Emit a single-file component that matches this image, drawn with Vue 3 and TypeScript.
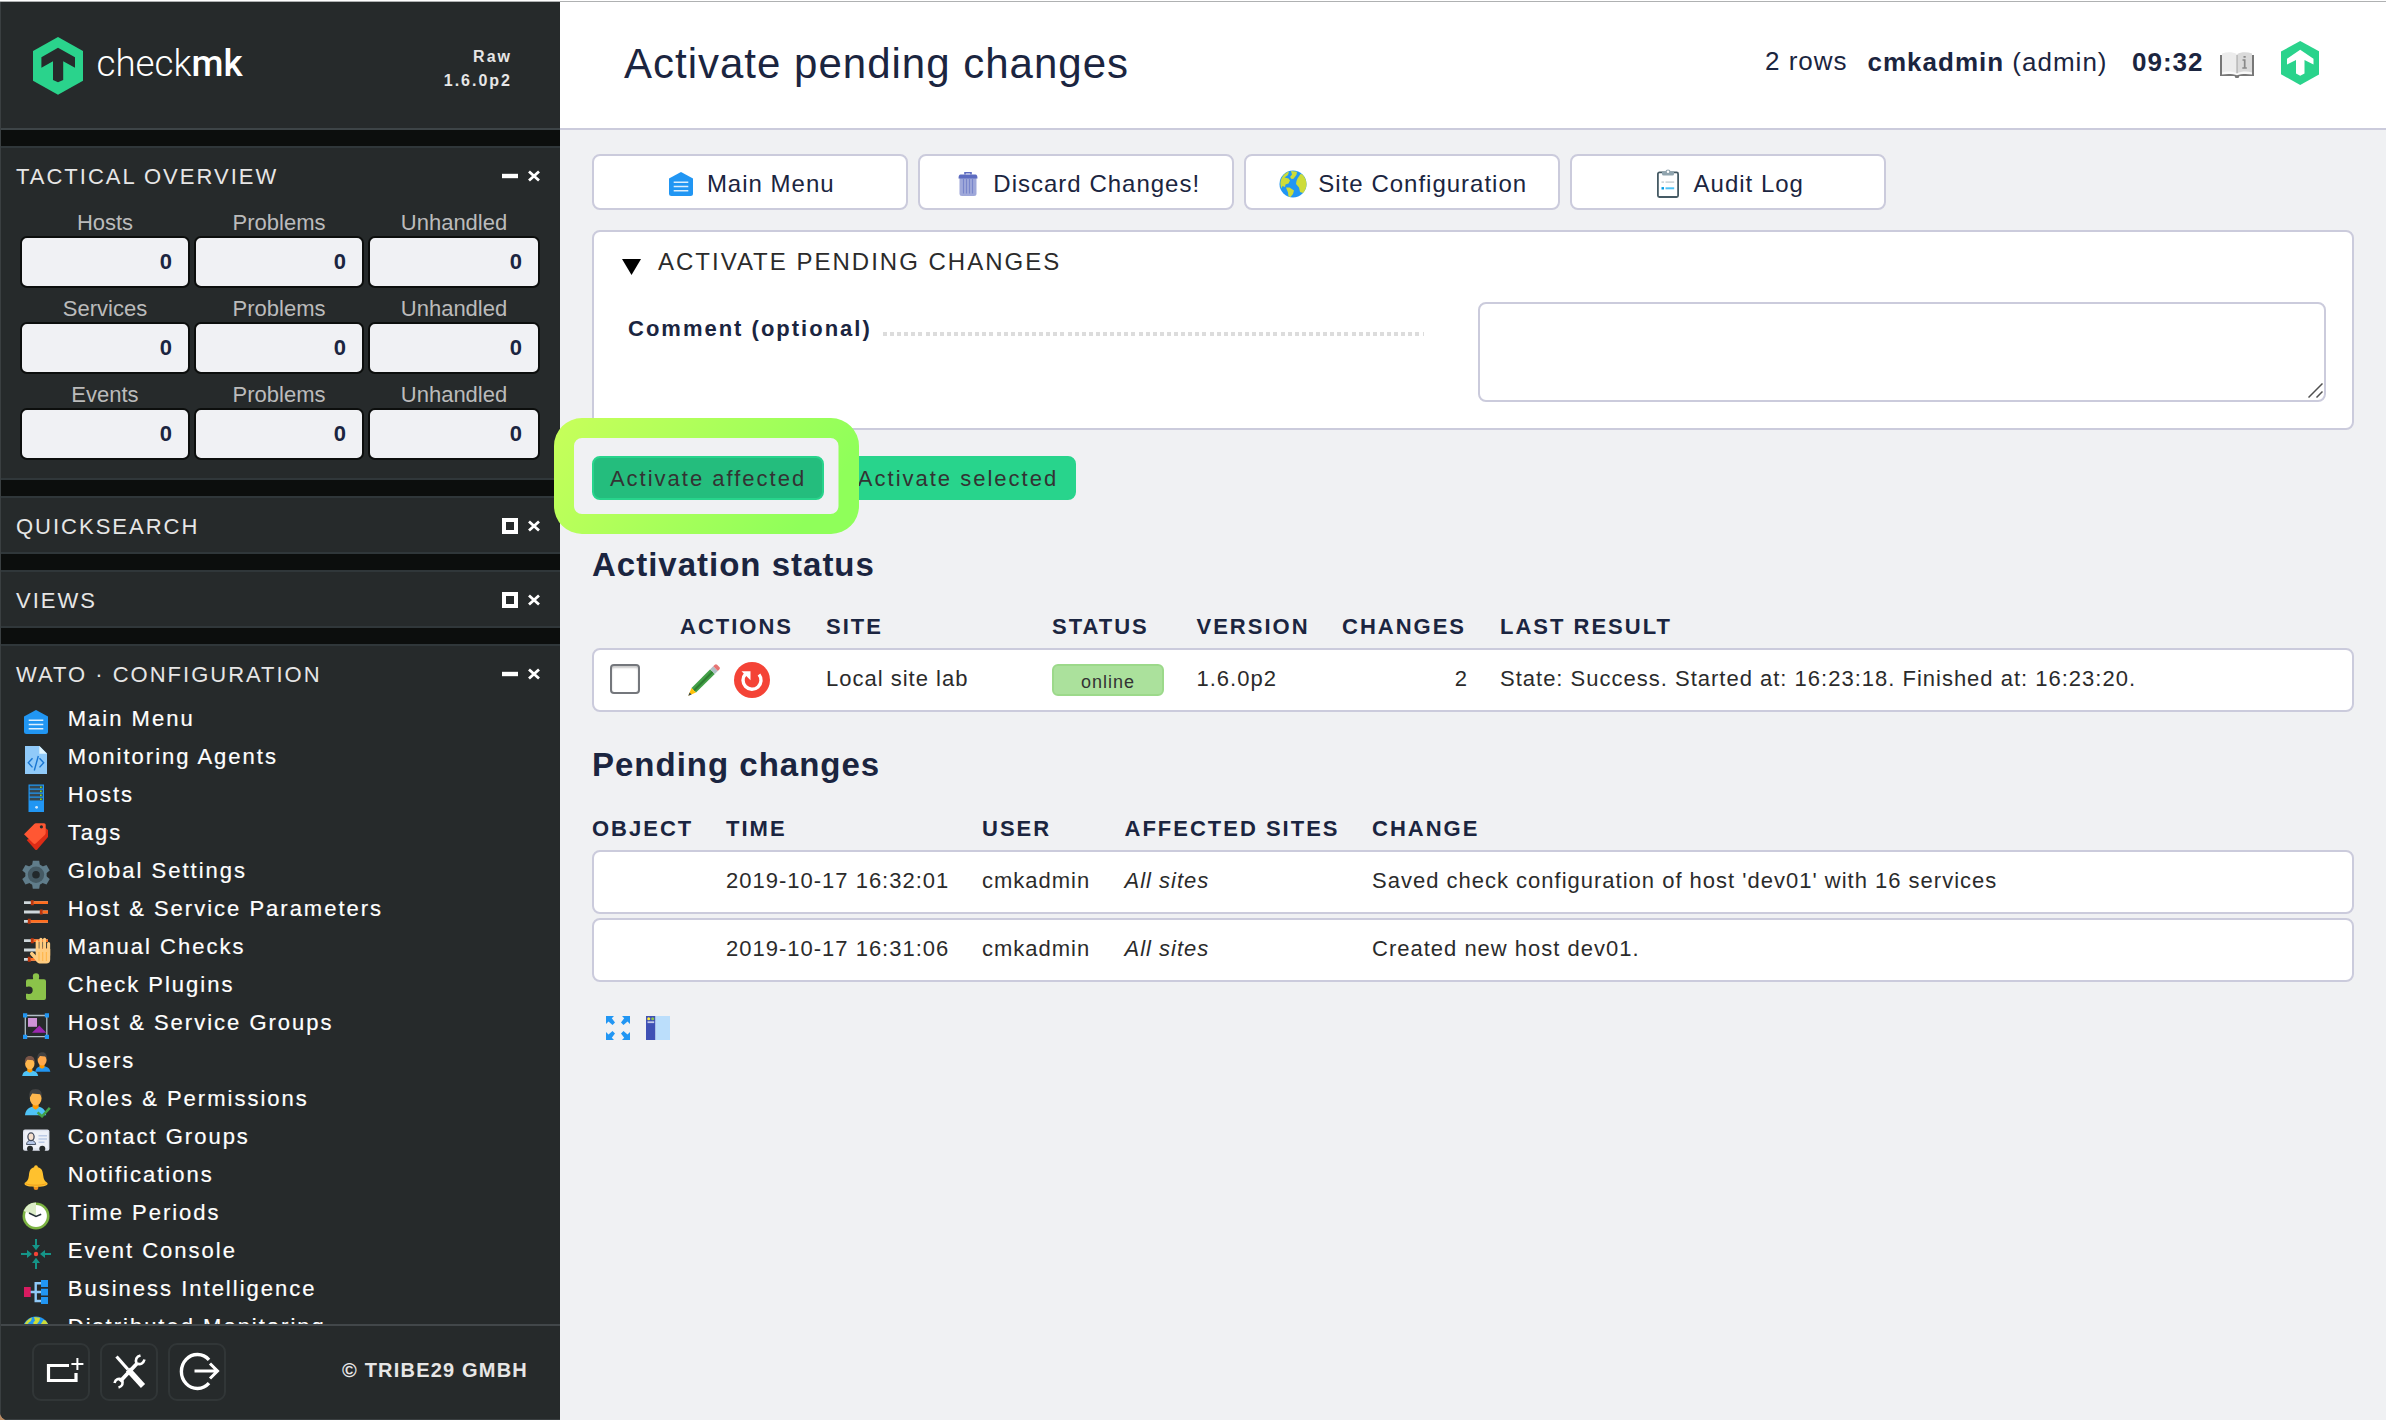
<script setup lang="ts">
interface MenuItem {
  label: string
  icon: string
}

interface OverviewCell {
  label: string
  value: number
}

interface PendingChange {
  time: string
  user: string
  sites: string
  text: string
}

const house =
  '<path d="M16 4 28 10.5v15a2.5 2.5 0 0 1-2.5 2.5h-19A2.5 2.5 0 0 1 4 25.500v-15z" fill="#2196f3"/><path d="M8.700 14.300h14.600M8.700 18.500h14.600M8.700 22.700h14.600" stroke="#dceefd" stroke-width="1.400"/>'

const globe =
  '<circle cx="16" cy="16" r="13.500" fill="#2196f3"/><path d="M4.500 10.500C6 7 9 4.500 12 3.500l-1 3.500-3.500 2.500 4 1 1.500 2-1.500 3-3 1-.5 2.500-2.500-1-1 2.500c-1.500-3.500-1.500-7 0-10zM14 3l6 .7-.5 3-3 4-2 .3-1.500-2 2-2.500zM20.500 10.500 23.500 6l2 .5c2.500 2.700 4 6 4 9.700 0 3.500-1.500 6.500-3.500 8.800l-3-1-1-4.500-3-3.500.5-3zM9 19.500l3.500 0 4.500 3-1 3.500-2.500 3-2-.5-.5-4z" fill="#cddc39"/>'

const sliders =
  '<path d="M4 6.700h24M4 16h24M4 25.300h24" stroke="#cfd8dc" stroke-width="2.800"/><path d="M14 6.700h14M23 16h5M11 25.300h17" stroke="#ff6d1f" stroke-width="2.800"/><path d="M12.300 4.200v5M21.300 13.500v5M9.300 22.800v5" stroke="#bf360c" stroke-width="3"/>'

const icons: Record<string, string> = {
  house,
  globe,
  sliders,
  agents:
    '<path d="M5 2h14.500L27 9.500V30H5z" fill="#90caf9"/><path d="M19.300 2 27 9.700h-7.700z" fill="#e1f5fe"/><path d="m12.500 14.200-4.200 4.600 4.200 4.600m7-9.200 4.200 4.600-4.200 4.600M18.300 12l-4 14.500" fill="none" stroke="#1976d2" stroke-width="1.400"/>',
  hosts:
    '<path d="M8.500 2.500H24V30H8.500z" fill="#2196f3"/><path d="M9.700 3.800h13.100v2.700H9.700zM9.700 7.800h13.100v2.700H9.700zM9.700 11.800h13.100v2.700H9.700zM9.700 15.800h13.100v2.700H9.700z" fill="#37474f"/><path d="M20 5.200h1.700M20 9.200h1.700M20 13.200h1.700M20 17.200h1.700" stroke="#8bd626" stroke-width="1.400"/><circle cx="16.600" cy="25.300" r="1.400" fill="#cfe8fd"/>',
  tags:
    '<path d="M25.500 8 28 10v7L17.300 29.500c-.7.700-1.500.7-2.200 0L6.700 20z" fill="#dd2c16"/><path d="M4 14.300 14 4.200c.6-.6 1.200-.9 2-.9h8c1 0 1.700.7 1.700 1.700v8c0 .8-.3 1.400-.9 2L16 23.200c-.9.9-1.900.9-2.800 0z" fill="#ff5733"/><circle cx="21.400" cy="6.800" r="1.600" fill="#262a2b"/>',
  gear:
    '<g fill="#607d8b"><circle cx="16" cy="16.700" r="10.700"/><path d="M12.800 2.700h6.400l.8 5v18l-.8 5h-6.400l-.8-5v-18z"/><path d="M12.800 2.700h6.400l.8 5v18l-.8 5h-6.400l-.8-5v-18z" transform="rotate(60 16 16.700)"/><path d="M12.800 2.700h6.400l.8 5v18l-.8 5h-6.400l-.8-5v-18z" transform="rotate(120 16 16.700)"/></g><circle cx="16" cy="16.700" r="8.200" fill="#455a64"/><circle cx="16" cy="16.700" r="3.800" fill="#22292c"/>',
  manual:
    sliders +
    '<path d="M17.200 7.500v10M20.900 5.300v12M24.600 5.300v12M28.600 9.500v12" stroke="#ffcc80" stroke-width="3.100" stroke-linecap="round"/><path d="m11.800 19.700 6 6.300" stroke="#ffcc80" stroke-width="3.600" stroke-linecap="round"/><path d="M15.700 15h14.500v10.500a4 4 0 0 1-4 4h-5.500c-3 0-5-2-5-5z" fill="#ffcc80"/><path d="M19 18v9M22.700 18v9M26.400 18v9" stroke="#ffb74d" stroke-width="1.200"/>',
  plugin:
    '<path d="M8 7.300h4.800c.7-.7 0-1.500 0-2.800a3.200 3.200 0 0 1 6.400 0c0 1.300-.7 2.100 0 2.800H24a2 2 0 0 1 2 2V26a2 2 0 0 1-2 2H8a2 2 0 0 1-2-2v-4.300c1.500 0 2 .2 3 .2a3.700 3.700 0 1 0 0-7.400c-1 0-1.500.3-3 .3V9.300a2 2 0 0 1 2-2z" fill="#8bc34a"/>',
  groups:
    '<path d="M5.300 5.500h21.500v21.200H5.300z" fill="none" stroke="#b0bec5" stroke-width="1.300"/><path d="M3 3.200h4.200v4.200H3zM24.800 3.200H29v4.200h-4.200zM3 24.700h4.200v4.200H3zM24.800 24.700H29v4.200h-4.200z" fill="#2196f3"/><path d="M8 8h9v8.800H8z" fill="#ce93d8"/><path d="m19.300 15.500 7 7.300H12z" fill="#9c27b0"/>',
  users:
    '<path d="M15.300 23.800c.5-4 3-5.500 7-5.800 4.500.3 7.400 2 8 5.800z" fill="#2196f3"/><path d="M19.500 15h5v4.500l-2.500 1.200-2.500-1.200z" fill="#ff9800"/><ellipse cx="22.100" cy="12" rx="4.500" ry="5.500" fill="#ffa94d"/><path d="M17.500 11.500c-.5-5 1.500-7.200 4.800-7.200 3.500 0 5 2.700 4.400 7.200l-1.200-3-5.500-.5z" fill="#424242"/><path d="M2.200 28c.5-4 3.300-5.500 7.600-5.800 4.700.3 7.700 1.800 8.400 5.800z" fill="#4fc3f7"/><path d="M7.300 19h5v4.500l-2.500 1.300-2.500-1.300z" fill="#ff9800"/><ellipse cx="9.800" cy="15.800" rx="4.700" ry="5.700" fill="#ffb74d"/><path d="M5 15.300C4.300 10.500 6.500 8 9.800 8c3.500 0 5.300 2.500 4.800 7.300l-1.300-3-6-.5z" fill="#795548"/>',
  roles:
    '<path d="M5 29.300c.5-6 4-8.500 10.700-9 6.500.5 9.800 3 10.500 9z" fill="#4fc3f7"/><path d="M12.600 16h6v5.700l-3 2-3-2z" fill="#ff9800"/><ellipse cx="15.700" cy="12" rx="5.900" ry="7.500" fill="#ffb74d"/><path d="M9.500 12C8.500 6 11 3 15.500 3c4.700 0 7 3 6.200 9l-1.500-3.800-8-.8z" fill="#424242"/><path d="m17.600 26.300 4.400 4 7.800-8.500" fill="none" stroke="#43a047" stroke-width="2.500"/>',
  contact:
    '<rect x="3" y="5.600" width="26.400" height="21.200" rx="2" fill="#dfe4ef"/><path d="M4.500 7.200h23.400v17H4.500z" fill="#eef1f8"/><path d="M6.500 20.500c.3-3 2-4 4.500-4.300 2.700.3 4.200 1.300 4.700 4.300z" fill="#b5c7e8" stroke="#4a5568" stroke-width="1"/><ellipse cx="11" cy="12.800" rx="3.100" ry="3.900" fill="#f5e0cf" stroke="#424a5c" stroke-width="1.300"/><path d="M18.500 11.800h8.500M18.500 15h8.500M18.500 18.200h6" stroke="#bccbe6" stroke-width="1.400"/><circle cx="10" cy="24.800" r="3" fill="#262a2b"/><circle cx="22.300" cy="24.800" r="3" fill="#262a2b"/>',
  bell:
    '<circle cx="16" cy="25.700" r="2.400" fill="#ef8f1c"/><path d="M16 3.300c1.200 0 1.800.8 1.900 2 4.300 1.200 4.900 4.200 5.300 8.200.4 4 1.800 6 4.300 7.500v1c0 2-6 2.900-11.500 2.900S4.600 24 4.600 22v-1c2.500-1.500 3.900-3.500 4.300-7.500.4-4 1-7 5.200-8.200.1-1.200.7-2 1.900-2z" fill="#ffc12e"/><path d="M5.500 21.700c5 2 16 2 21 0" fill="none" stroke="#ef9f1c" stroke-width="1"/>',
  clock:
    '<circle cx="16" cy="16" r="13.500" fill="#7cb342"/><circle cx="16" cy="16" r="10.900" fill="#fff"/><path d="M16 16V2.500A13.500 13.500 0 0 0 3.600 11z" fill="#dcedc8"/><path d="m9 13 7 3.400 5.200-2.200" fill="none" stroke="#263238" stroke-width="1.500"/>',
  event:
    '<path d="M15 1h2v6h3l-4 5.300L12 7h3zM15 31h2v-6h3l-4-5.300-4 5.300h3zM1 15v2h6v3l5-4-5-4v3zM31 15v2h-6v3l-5-4 5-4v3z" fill="#159588"/><circle cx="16" cy="16" r="2.200" fill="#f44336"/>',
  bi:
    '<path d="M10 16h12M22 7.200h-6.300V25H22" fill="none" stroke="#90caf9" stroke-width="2.400"/><path d="M4 11h6.700v10H4z" fill="#d81b60"/><path d="M21 4h7v7h-7zM21 12.800h7v6.700h-7zM21 21h7v7h-7z" fill="#2196f3"/>',
  trash:
    '<path d="M13 6.500V4.800h6v1.700" fill="none" stroke="#5c6bc0" stroke-width="1.600"/><path d="M7.500 10h17v15.500a2.500 2.500 0 0 1-2.500 2.500H10a2.500 2.500 0 0 1-2.500-2.500z" fill="#9fa8da"/><path d="M11.500 11v14.500M14.500 11v14.500M17.500 11v14.500M20.500 11v14.500" stroke="#7986cb" stroke-width="1.100"/><path d="M8.500 6.400h15c1.200 0 2 1.500 2 4.100h-19c0-2.600.8-4.100 2-4.100z" fill="#5c6bc0"/>',
  clipboard:
    '<rect x="5.900" y="4.400" width="20.200" height="24.600" rx="1.500" fill="#fff" stroke="#455a64" stroke-width="1.800"/><path d="M10 3.500h3.300a2.800 2.800 0 0 1 5.400 0H22V6a1.500 1.500 0 0 1-1.500 1.500h-9A1.500 1.500 0 0 1 10 6z" fill="#90a4ae"/><circle cx="16" cy="3.700" r="1.200" fill="#fff"/><path d="M9.500 14.200H12M13.500 14.200h8.700" stroke="#cfd8dc" stroke-width="1.800"/><path d="M9.500 20.300H12" stroke="#039be5" stroke-width="2.400"/><path d="M13.500 20.300h8.700" stroke="#4fc3f7" stroke-width="2"/>',
}

const overview: OverviewCell[][] = ['Hosts', 'Services', 'Events'].map((name) =>
  [name, 'Problems', 'Unhandled'].map((label) => ({ label, value: 0 })),
)

const wato: MenuItem[] = [
  { label: 'Main Menu', icon: 'house' },
  { label: 'Monitoring Agents', icon: 'agents' },
  { label: 'Hosts', icon: 'hosts' },
  { label: 'Tags', icon: 'tags' },
  { label: 'Global Settings', icon: 'gear' },
  { label: 'Host & Service Parameters', icon: 'sliders' },
  { label: 'Manual Checks', icon: 'manual' },
  { label: 'Check Plugins', icon: 'plugin' },
  { label: 'Host & Service Groups', icon: 'groups' },
  { label: 'Users', icon: 'users' },
  { label: 'Roles & Permissions', icon: 'roles' },
  { label: 'Contact Groups', icon: 'contact' },
  { label: 'Notifications', icon: 'bell' },
  { label: 'Time Periods', icon: 'clock' },
  { label: 'Event Console', icon: 'event' },
  { label: 'Business Intelligence', icon: 'bi' },
  { label: 'Distributed Monitoring', icon: 'globe' },
]

const contextButtons: MenuItem[] = [
  { label: 'Main Menu', icon: 'house' },
  { label: 'Discard Changes!', icon: 'trash' },
  { label: 'Site Configuration', icon: 'globe' },
  { label: 'Audit Log', icon: 'clipboard' },
]

const changes: PendingChange[] = [
  {
    time: '2019-10-17 16:32:01',
    user: 'cmkadmin',
    sites: 'All sites',
    text: "Saved check configuration of host 'dev01' with 16 services",
  },
  { time: '2019-10-17 16:31:06', user: 'cmkadmin', sites: 'All sites', text: 'Created new host dev01.' },
]
</script>

<template>
  <div class="app">
    <aside class="sidebar">
      <header class="brand">
        <svg class="brand-hex" viewBox="0 0 50 58">
          <path d="M25 0 50 14v29.700L25 57.700 0 43.700V14z" fill="#2ad38c" />
          <path d="M25 10.700 42 20.300v10.400l-11.800-6.400V43L25 45.300 20 43V24.300L8.400 30.700V20.300z" fill="#262a2b" />
        </svg>
        <span class="brand-name">check<b>mk</b></span>
        <span class="brand-version">Raw<br />1.6.0p2</span>
      </header>

      <section class="snapin tactical">
        <div class="snapin-head">
          <h2>Tactical Overview</h2>
          <svg viewBox="0 0 38 16"><path d="M0 8h16" stroke-width="4.400" /><path d="m27 3.500 10 9M37 3.500l-10 9" stroke-width="2.800" /></svg>
        </div>
        <div v-for="(row, i) in overview" :key="i" class="overview-row">
          <div v-for="cell in row" :key="cell.label" class="overview-cell">
            <span>{{ cell.label }}</span>
            <b>{{ cell.value }}</b>
          </div>
        </div>
      </section>

      <section v-for="name in ['Quicksearch', 'Views']" :key="name" class="snapin">
        <div class="snapin-head">
          <h2>{{ name }}</h2>
          <svg viewBox="0 0 38 16"><path d="M2 2h12v12H2z" stroke-width="4" /><path d="m27 3.500 10 9M37 3.500l-10 9" stroke-width="2.800" /></svg>
        </div>
      </section>

      <section class="snapin wato">
        <div class="snapin-head">
          <h2>WATO · Configuration</h2>
          <svg viewBox="0 0 38 16"><path d="M0 8h16" stroke-width="4.400" /><path d="m27 3.500 10 9M37 3.500l-10 9" stroke-width="2.800" /></svg>
        </div>
        <ul>
          <li v-for="item in wato" :key="item.label">
            <svg class="icon" viewBox="0 0 32 32" v-html="icons[item.icon]"></svg>
            <a>{{ item.label }}</a>
          </li>
        </ul>
      </section>

      <footer class="side-footer">
        <button type="button">
          <svg viewBox="0 0 58 58"><path d="M37 22.500H16.500V37.500H44V30" stroke-width="3.200" /><path d="M45.400 15v12M39.400 21h12" stroke-width="2" /></svg>
        </button>
        <button type="button">
          <svg viewBox="0 0 58 58">
            <path d="m16.500 13.500 11.500 13" stroke-width="3.200" />
            <path d="m28 26.500 15 16.500" stroke-width="5.600" />
            <path d="M37 20.500 20 38.500" stroke-width="3.800" />
            <path d="M40.500 12.500c-4 1-5.500 4-4 8 4 1.500 7 0 8-4M14.500 40c1-4 4-5 7.500-3.500 1.500 4 .5 7-3.500 8" stroke-width="2.600" />
          </svg>
        </button>
        <button type="button">
          <svg viewBox="0 0 58 58">
            <path d="M41 16.800a16 17 0 1 0 0 23.400" stroke-width="3.400" />
            <path d="M26.500 28H49M42 20.500l7.500 7.500-7.500 7.500" stroke-width="3" />
          </svg>
        </button>
        <span>© TRIBE29 GMBH</span>
      </footer>
    </aside>

    <main class="content">
      <header class="top">
        <h1>Activate pending changes</h1>
        <div class="top-info">
          <span class="rows">2 rows</span>
          <span class="user"><b>cmkadmin</b> (admin)</span>
          <b class="time">09:32</b>
          <svg class="book" viewBox="0 0 34 26">
            <path d="M0 3h34v21H19.500l-1 2h-3l-1-2H0z" fill="#777" />
            <path d="M2 1.500C7-.5 13-.3 16.700 2v20C13 20 7 20 2 21.500z" fill="#ececec" />
            <path d="M32 1.500C27-.5 21-.3 17.300 2v20C21 20 27 20 32 21.500z" fill="#dadada" />
            <path d="M2 20.500c5-1.500 11-1.200 15 1 4-2.200 10-2.500 15-1v2c-5-1-11-.8-15 .8-4-1.600-10-1.800-15-.8z" fill="#fafafa" />
            <path d="M23.500 4.800h2.200M22.500 8h2.200v8M22.300 16h4.500" fill="none" stroke="#888" stroke-width="1.700" />
          </svg>
          <svg class="hex" viewBox="0 0 38.500 44">
            <path d="M19.200 0 38.500 10.500v22.700L19.200 44 0 33.200V10.500z" fill="#2ad38c" />
            <path d="m19.200 8.700 13.300 9v5.800L23.500 19v13.500l-4.300 2.300-4.200-2.300V19L6 23.500v-5.800z" fill="#fff" />
          </svg>
        </div>
      </header>

      <nav class="context">
        <a v-for="button in contextButtons" :key="button.label">
          <svg class="icon" viewBox="0 0 32 32" v-html="icons[button.icon]"></svg>
          <span>{{ button.label }}</span>
        </a>
      </nav>

      <section class="panel">
        <div class="panel-head">
          <svg viewBox="0 0 19 16"><path d="M0 0h19L9.500 16z" /></svg>
          <h3>Activate pending changes</h3>
        </div>
        <div class="panel-row">
          <label>Comment (optional)</label>
          <i class="dots"></i>
          <div class="textarea">
            <svg viewBox="0 0 15 15"><path d="M.5 14.500l14-14M8.500 14.500l6-6" /></svg>
          </div>
        </div>
      </section>

      <div class="actions">
        <div class="highlighted">
          <button type="button" class="hot">Activate affected</button>
          <svg class="highlight" viewBox="0 0 305 116">
            <defs>
              <linearGradient id="lime" x1="0" y1="0" x2="1" y2="0.300">
                <stop offset="0" stop-color="#c8ff5a" />
                <stop offset="1" stop-color="#8fff5a" />
              </linearGradient>
            </defs>
            <path
              fill="url(#lime)"
              fill-rule="evenodd"
              d="M28 0h249a28 28 0 0 1 28 28v60a28 28 0 0 1-28 28H28A28 28 0 0 1 0 88V28A28 28 0 0 1 28 0zM28 20a8 8 0 0 0-8 8v60a8 8 0 0 0 8 8h248.500a8 8 0 0 0 8-8V28a8 8 0 0 0-8-8z"
            />
          </svg>
        </div>
        <button type="button" class="second">Activate selected</button>
      </div>

      <h2 class="heading">Activation status</h2>
      <div class="grid sites head">
        <span></span><span>Actions</span><span>Site</span><span>Status</span><span>Version</span><span>Changes</span><span>Last result</span>
      </div>
      <div class="grid sites row">
        <span><i class="checkbox"></i></span>
        <span class="row-icons">
          <svg class="pencil" viewBox="0 0 32 32">
            <path d="m3.500 24 18.700-18.700 4.600 4.600L8 28.500z" fill="#43a047" />
            <path d="m5.200 25.700 18.700-18.700 1.500 1.500L6.700 27.200z" fill="#2e7d32" />
            <path d="m22.200 5.300 3-3 4.600 4.600-3 3z" fill="#b0bec5" />
            <path d="m25.200 2.300 1.600-1.500c.8-.8 1.500-.8 2.300 0l2.200 2.200c.8.800.8 1.600 0 2.400l-1.500 1.500z" fill="#e57373" />
            <path d="M3.500 24 .3 31.700 8 28.500z" fill="#ffc107" />
            <path d="m1.600 28.500-1.300 3.200 3.300-1.300z" fill="#37474f" />
          </svg>
          <svg class="restart" viewBox="0 0 36 36">
            <circle cx="18" cy="18" r="18" fill="#f44336" />
            <path d="M25 12.500a9 9 0 1 1-13.500-.5" fill="none" stroke="#fff" stroke-width="3.400" />
            <path d="M7.500 9.300h9v9z" fill="#fff" />
          </svg>
        </span>
        <span>Local site lab</span>
        <span><em class="online">online</em></span>
        <span>1.6.0p2</span>
        <span class="number">2</span>
        <span>State: Success. Started at: 16:23:18. Finished at: 16:23:20.</span>
      </div>

      <h2 class="heading pending">Pending changes</h2>
      <div class="grid log head">
        <span>Object</span><span>Time</span><span>User</span><span>Affected sites</span><span>Change</span>
      </div>
      <div v-for="change in changes" :key="change.time" class="grid log row">
        <span></span>
        <span>{{ change.time }}</span>
        <span>{{ change.user }}</span>
        <span class="slanted">{{ change.sites }}</span>
        <span>{{ change.text }}</span>
      </div>

      <div class="tools">
        <svg viewBox="0 0 24 24">
          <path d="M0 0h8L5.800 2.200 9 6.500 6.500 9 2.500 5.500 0 8zM24 0h-8l2.200 2.200L15 6.500 17.500 9l4-3.500L24 8zM0 24h8l-2.200-2.200L9 17.500 6.500 15l-4 3.500L0 16zM24 24h-8l2.200-2.200-3.200-4.300 2.500-2.500 4 3.500L24 16z" fill="#2196f3" />
        </svg>
        <svg viewBox="0 0 24 24">
          <path d="M0 0h9.500v24H0z" fill="#3f51b5" />
          <path d="M9.500 0H24v24H9.500z" fill="#bbdefb" />
          <circle cx="2.700" cy="2.700" r="1.500" fill="#ffeb3b" />
          <circle cx="6.700" cy="2.700" r="1.500" fill="#8bc34a" />
          <path d="M1.500 5.300h6.700v1.800H1.500z" fill="#c5cae9" />
        </svg>
      </div>
    </main>
  </div>
</template>

<style>
body {
  background: #b98a63;
  overflow: hidden;
}
</style>

<style scoped>
.app {
  box-sizing: border-box;
  display: flex;
  width: 2386px;
  height: 1420px;
  overflow: hidden;
  border-bottom-left-radius: 8px;
  background: linear-gradient(#fff 1px, #afb1b2 1px, #afb1b2 2px, #f0f1f3 2px);
  padding-top: 2px;
  color: #2b2b2b;
  font: 22px/25px "Liberation Sans", Arial, sans-serif;
  letter-spacing: 1px;
  white-space: nowrap;
}
h1,
h2,
h3,
ul {
  margin: 0;
  padding: 0;
  font-weight: 400;
}
button {
  padding: 0;
  font: inherit;
  letter-spacing: inherit;
}
svg {
  display: block;
}
.icon {
  flex: none;
  width: 32px;
  height: 32px;
}

/* sidebar */
.sidebar {
  box-sizing: border-box;
  flex: none;
  display: flex;
  flex-direction: column;
  width: 560px;
  height: 1418px;
  border-left: 1px solid #3a3f41;
  background: #0c0e0d;
}
.brand {
  box-sizing: border-box;
  flex: none;
  display: flex;
  align-items: flex-start;
  height: 128px;
  padding: 35px 48px 0 32px;
  border-bottom: 2px solid #3d4447;
  background: #262a2b;
  color: #fff;
}
.brand-hex {
  width: 50px;
  height: 58px;
}
.brand-name {
  margin: 5px auto 0 13.500px;
  font: 300 36.700px/44px Roboto, sans-serif;
  letter-spacing: 0;
}
.brand-name b {
  font-weight: 500;
}
.brand-version {
  margin-top: 8px;
  color: #e6e6e6;
  font-size: 16px;
  font-weight: 700;
  line-height: 24px;
  letter-spacing: 2px;
  text-align: right;
}
.snapin {
  flex: none;
  margin-top: 16px;
  border-top: 2px solid #30373a;
  border-bottom: 2px solid #30373a;
  padding-top: 16px;
  background: #262a2b;
}
.snapin-head {
  display: flex;
  justify-content: space-between;
  padding: 0 20px 13px 15px;
}
.snapin-head h2 {
  color: #e6e6e6;
  font-size: 22px;
  letter-spacing: 2px;
  text-transform: uppercase;
}
.snapin-head svg {
  width: 38px;
  height: 16px;
  margin-top: 4px;
  fill: none;
  stroke: #fff;
}
.tactical .snapin-head {
  padding-bottom: 21px;
}
.tactical {
  padding-bottom: 10px;
}
.overview-row {
  display: grid;
  grid-template-columns: 170px 170px 172px;
  column-gap: 4px;
  margin: 0 0 8px 19px;
  color: #bbb;
  letter-spacing: 0;
}
.overview-cell {
  text-align: center;
}
.overview-cell span {
  display: block;
  margin-bottom: 1px;
}
.overview-cell b {
  box-sizing: border-box;
  display: block;
  height: 52px;
  padding: 11px 16px 0 0;
  border: 2px solid #0c0e0d;
  border-radius: 7px;
  background: #f0f1f4;
  color: #1b2540;
  text-align: right;
}
.wato {
  flex: 1;
  min-height: 0;
  overflow: hidden;
  border-bottom: 0;
}
.wato .snapin-head {
  padding-bottom: 16px;
}
.wato ul {
  list-style: none;
  color: #fff;
  letter-spacing: 2px;
  -webkit-text-stroke: 0.200px #fff;
}
.wato li {
  display: flex;
  height: 38px;
  box-sizing: border-box;
  padding: 3px 0 0 19px;
}
.wato li a {
  margin-left: 15.800px;
}
.side-footer {
  box-sizing: border-box;
  flex: none;
  display: flex;
  align-items: center;
  gap: 10px;
  height: 96px;
  padding: 0 32px 2px 31px;
  border-top: 2px solid #42474a;
  border-bottom: 1px solid #3a3f41;
  background: #262a2b;
}
.side-footer button {
  box-sizing: border-box;
  width: 58px;
  height: 58px;
  border: 2px solid #313637;
  border-radius: 9px;
  background: none;
}
.side-footer button svg {
  width: 58px;
  height: 58px;
  margin: -2px;
  fill: none;
  stroke: #fff;
}
.side-footer span {
  margin: -2px 0 0 auto;
  color: #e6e6e6;
  font-size: 20px;
  font-weight: 700;
  letter-spacing: 1.200px;
}

/* main area */
.content {
  flex: 1;
  min-width: 0;
  padding: 0 32px;
  background: #f0f1f3;
}
.top {
  box-sizing: border-box;
  display: flex;
  justify-content: space-between;
  height: 128px;
  margin: 0 -32px;
  padding: 38px 67px 0 64px;
  border-bottom: 2px solid #cbcbdc;
  background: #fff;
  color: #1b2540;
}
.top h1 {
  font-size: 42px;
  line-height: 47px;
}
.top-info {
  display: flex;
  align-items: flex-start;
  margin-top: 7px;
  font-size: 26px;
  line-height: 30px;
}
.rows {
  margin-top: -1px;
}
.user {
  margin: 0 24.500px 0 20px;
}
.book {
  width: 34px;
  height: 26px;
  margin: 5px 26.500px 0 16.500px;
}
.hex {
  width: 38.500px;
  height: 44px;
  margin-top: -6px;
}
.context {
  display: flex;
  gap: 10px;
  margin-top: 24px;
}
.context a {
  box-sizing: border-box;
  display: flex;
  align-items: flex-start;
  justify-content: center;
  width: 316px;
  height: 56px;
  padding-top: 12px;
  border: 2px solid #cbcbdc;
  border-radius: 8px;
  background: #fff;
  color: #1b2540;
  font-size: 24px;
  line-height: 27px;
}
.context .icon {
  margin-right: 9.500px;
}
.context span {
  margin-top: 2px;
}
.panel {
  box-sizing: border-box;
  height: 200px;
  margin-top: 20px;
  padding: 16px 26px 0 28px;
  border: 2px solid #cbcbdc;
  border-radius: 8px;
  background: #fff;
}
.panel-head {
  display: flex;
}
.panel-head svg {
  width: 19px;
  height: 16px;
  margin: 11px 17px 0 0;
}
.panel-head h3 {
  font-size: 24px;
  line-height: 27px;
  letter-spacing: 2px;
  text-transform: uppercase;
}
.panel-row {
  display: flex;
  align-items: flex-start;
  margin: 27px 0 0 6px;
}
.panel-row label {
  margin-top: 14px;
  color: #1b2540;
  font-weight: 700;
  letter-spacing: 2px;
}
.dots {
  flex: 1;
  height: 4px;
  margin: 30px 54px 0 11px;
  background: repeating-linear-gradient(90deg, #dcdcdc 0 4px, transparent 4px 7.100px);
}
.textarea {
  box-sizing: border-box;
  display: flex;
  align-items: flex-end;
  justify-content: flex-end;
  width: 848px;
  height: 100px;
  border: 2px solid #cbcbdc;
  border-radius: 8px;
  background: #fff;
}
.textarea svg {
  width: 15px;
  height: 15px;
  margin: 0 1px 2px 0;
  stroke: #505050;
  stroke-width: 1.500;
}
.actions {
  display: flex;
  gap: 16px;
  margin-top: 26px;
  letter-spacing: 2px;
}
.actions button {
  box-sizing: border-box;
  height: 44px;
  border: 2px solid #28d48c;
  border-radius: 8px;
  background: #28d48c;
  color: #333;
}
.highlighted {
  position: relative;
}
.actions .hot {
  display: block;
  width: 232px;
  background: #24bd7d;
}
.actions .second {
  width: 236px;
}
.highlight {
  position: absolute;
  top: -38px;
  left: -38px;
  width: 305px;
  height: 116px;
}
.heading {
  margin: 46px 0 31px;
  color: #1b2540;
  font-size: 33px;
  font-weight: 700;
  line-height: 37px;
}
.heading.pending {
  margin: 34px 0 33px;
}
.grid {
  display: grid;
}
.head {
  height: 34px;
  color: #1b2540;
  font-weight: 700;
  letter-spacing: 2px;
  text-transform: uppercase;
}
.sites {
  grid-template-columns: 88px 146px 226px 144.500px 145.500px 158px 1fr;
}
.log {
  grid-template-columns: 134px 256px 142.500px 247.500px 1fr;
}
.row {
  box-sizing: border-box;
  height: 64px;
  margin-bottom: 4px;
  padding-top: 16px;
  border: 2px solid #cbcbdc;
  border-radius: 8px;
  background: #fff;
}
.sites.row {
  grid-template-columns: 86px 146px 226px 144.500px 145.500px 158px 1fr;
  margin-bottom: 0;
}
.log.row {
  grid-template-columns: 132px 256px 142.500px 247.500px 1fr;
}
.checkbox {
  box-sizing: border-box;
  display: block;
  width: 30px;
  height: 30px;
  margin: -2px 0 0 16px;
  border: 2px solid #74777c;
  border-radius: 4px;
  background: #fff;
  box-shadow: inset 0 2px 2px #ccc;
}
.row-icons {
  display: flex;
  align-items: center;
  gap: 14px;
  height: 36px;
  margin: -4px 0 0 8px;
}
.pencil {
  width: 32px;
  height: 32px;
}
.restart {
  width: 36px;
  height: 36px;
}
.online {
  box-sizing: border-box;
  display: block;
  width: 112px;
  height: 32px;
  margin-top: -2px;
  padding-top: 6px;
  border: 2px solid #9cd98a;
  border-radius: 6px;
  background: #abe19c;
  color: #333;
  font-size: 18px;
  font-style: normal;
  line-height: 20px;
  text-align: center;
}
.number {
  padding-right: 32px;
  text-align: right;
}
.slanted {
  font-style: italic;
}
.tools {
  display: flex;
  gap: 16px;
  margin: 34px 0 0 14px;
}
.tools svg {
  width: 24px;
  height: 24px;
}
</style>
